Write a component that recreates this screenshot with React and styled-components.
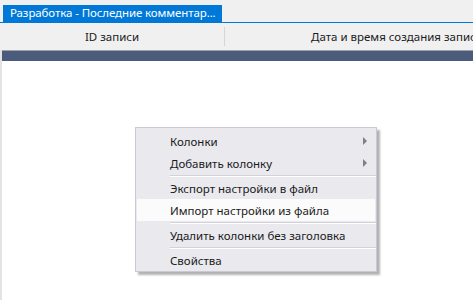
import React from "react";
import styled, { createGlobalStyle } from "styled-components";

const GlobalStyle = createGlobalStyle`
  html, body {
    margin: 0;
    padding: 0;
    background: #ffffff;
    overflow: hidden;
  }
  body {
    font-family: "Segoe UI", "Noto Sans", "DejaVu Sans", sans-serif;
    font-size: 11.5px;
  }
`;

const Window = styled.div`
  width: 473px;
  height: 300px;
  display: flex;
  flex-direction: column;
  background: #ffffff;
  position: relative;
`;

const TabStrip = styled.div`
  height: 22px;
  background: #f0f0f0;
  border-bottom: 1px solid #0078d7;
  display: flex;
  align-items: flex-end;
  padding-left: 3px;
`;

const Tab = styled.div`
  height: 17px;
  width: 219px;
  background: #0078d7;
  color: #ffffff;
  padding-left: 7px;
  box-sizing: border-box;
  line-height: 16px;
  white-space: nowrap;
  overflow: hidden;
  letter-spacing: -0.1px;
`;

const Header = styled.div`
  height: 27px;
  background: #f0f0f0;
  display: flex;
  align-items: center;
`;

const HeaderCell = styled.div`
  width: ${(p) => p.$width}px;
  flex: none;
  height: 100%;
  display: flex;
  align-items: center;
  justify-content: ${(p) => (p.$center ? "center" : "flex-start")};
  padding-left: ${(p) => p.$pad || 0}px;
  box-sizing: border-box;
  color: #1a1a1a;
  white-space: nowrap;
  overflow: hidden;
`;

const Divider = styled.div`
  width: 1px;
  height: 19px;
  background: #d6d6d6;
  flex: none;
`;

const Grid = styled.div`
  flex: 1;
  border-left: 2px solid #e3e3e3;
  display: flex;
  flex-direction: column;
`;

const GroupBar = styled.div`
  height: 10px;
  background: #4b5b7c;
  border-top: 1px solid #a3a3a3;
`;

const Body = styled.div`
  flex: 1;
  background: #ffffff;
`;

const Menu = styled.div`
  position: absolute;
  left: 135px;
  top: 127px;
  width: 242px;
  padding: 2px 0 0;
  background: #e9e9ee;
  border: 1px solid #c9c9d6;
  box-sizing: border-box;
  box-shadow: 3px 3px 2px rgba(0, 0, 0, 0.3);
`;

const Item = styled.div`
  height: 22px;
  margin: 0 1px;
  display: flex;
  align-items: center;
  padding-left: 33px;
  padding-right: 8px;
  color: #1a1a1a;
  background: ${(p) => (p.$hover ? "#fbfbfb" : "transparent")};
  white-space: nowrap;
`;

const Label = styled.span`
  flex: 1;
`;

const Arrow = styled.span`
  width: 0;
  height: 0;
  border-top: 4px solid transparent;
  border-bottom: 4px solid transparent;
  border-left: 4px solid #808080;
`;

const Separator = styled.div`
  height: 3px;
  display: flex;
  align-items: center;
  padding-left: 34px;
  &::after {
    content: "";
    flex: 1;
    height: 1px;
    background: #d2d2da;
    border-bottom: 1px solid #ffffff;
  }
`;

const items = [
  { label: "Колонки", sub: true },
  { label: "Добавить колонку", sub: true },
  { sep: true },
  { label: "Экспорт настройки в файл" },
  { label: "Импорт настройки из файла", hover: true },
  { sep: true },
  { label: "Удалить колонки без заголовка" },
  { sep: true },
  { label: "Свойства" },
];

export default function App() {
  return (
    <Window>
      <GlobalStyle />
      <TabStrip>
        <Tab>Разработка - Последние комментар...</Tab>
      </TabStrip>
      <Header>
        <HeaderCell $width={224} $center>
          ID записи
        </HeaderCell>
        <Divider />
        <HeaderCell $width={248} $pad={86}>
          Дата и время создания записи
        </HeaderCell>
      </Header>
      <Grid>
        <GroupBar />
        <Body />
      </Grid>
      <Menu>
        {items.map((it, i) =>
          it.sep ? (
            <Separator key={i} />
          ) : (
            <Item key={i} $hover={it.hover}>
              <Label>{it.label}</Label>
              {it.sub && <Arrow />}
            </Item>
          )
        )}
      </Menu>
    </Window>
  );
}
